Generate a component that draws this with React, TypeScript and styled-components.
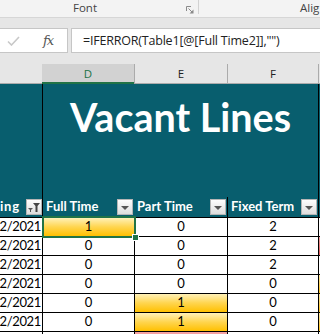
import { createGlobalStyle, styled } from "styled-components";

const teal = "#085e6e";
const excelGreen = "#217346";

const GlobalStyle = createGlobalStyle`
  html, body {
    margin: 0;
    padding: 0;
    background: #ffffff;
  }
  body {
    width: 320px;
    height: 334px;
    overflow: hidden;
    font-family: "Lato", "Liberation Sans", sans-serif;
  }
`;

const Page = styled.div`
  width: 320px;
  height: 334px;
  overflow: hidden;
  display: flex;
  flex-direction: column;
`;

// ribbon group labels
const Ribbon = styled.div`
  height: 17px;
  flex-shrink: 0;
  display: flex;
  align-items: flex-start;
  background: #f3f3f3;
  border-bottom: 1px solid #d6d6d6;
  font-family: "Open Sans", "Liberation Sans", sans-serif;
  font-size: 11.5px;
  line-height: 16px;
  color: #444444;
  white-space: nowrap;
  overflow: hidden;
`;

const RibbonGroup = styled.div`
  width: 198px;
  flex-shrink: 0;
  display: flex;
  align-items: flex-start;
`;

const GroupLabel = styled.span<{ $indent: number }>`
  flex-shrink: 0;
  margin-left: ${(p) => p.$indent}px;
`;

const Launcher = styled.svg`
  margin-left: auto;
  margin-right: 4px;
  margin-top: 6px;
  width: 8px;
  height: 8px;
`;

const GroupDivider = styled.div`
  width: 1px;
  height: 14px;
  flex-shrink: 0;
  background: #d2d2d2;
`;

// formula bar
const FormulaBar = styled.div`
  height: 35px;
  flex-shrink: 0;
  box-sizing: border-box;
  padding-top: 10px;
  display: flex;
  align-items: flex-start;
  gap: 3px;
  background: #e6e6e6;
`;

const ButtonsBox = styled.div`
  width: 68px;
  height: 25px;
  flex-shrink: 0;
  box-sizing: border-box;
  display: flex;
  align-items: center;
  background: #ffffff;
  border: 1px solid #c6c6c6;
  border-left: none;
`;

const CheckIcon = styled.svg`
  width: 13px;
  height: 10px;
  margin-left: 7px;
`;

const FxLabel = styled.span`
  margin-left: 23px;
  font-family: "DejaVu Serif", "Liberation Serif", serif;
  font-style: italic;
  font-size: 13px;
  color: #555555;
  letter-spacing: -1px;
`;

const FormulaInput = styled.div`
  flex: 1;
  height: 25px;
  box-sizing: border-box;
  padding-left: 11px;
  background: #ffffff;
  border: 1px solid #c6c6c6;
  border-right: none;
  font-family: "Open Sans", "Liberation Sans", sans-serif;
  font-size: 12.5px;
  letter-spacing: -0.2px;
  line-height: 23px;
  color: #222222;
  white-space: nowrap;
  overflow: hidden;
`;

// column letters
const ColumnStrip = styled.div`
  flex-shrink: 0;
  padding-top: 11px;
  background: #e6e6e6;
  display: grid;
  grid-template-columns: 42px 92px 93px 91px 2px;
`;

const ColumnLetter = styled.div<{ $selected?: boolean; $edge?: boolean }>`
  height: 20px;
  box-sizing: border-box;
  display: flex;
  align-items: center;
  justify-content: center;
  font-family: "Open Sans", "Liberation Sans", sans-serif;
  font-size: 11.5px;
  color: ${(p) => (p.$selected ? excelGreen : "#222222")};
  background: ${(p) => (p.$selected ? "#d2d2d2" : "#e6e6e6")};
  border-left: ${(p) => (p.$edge ? "1px solid #ababab" : "none")};
  border-bottom: ${(p) =>
    p.$selected ? `2px solid ${excelGreen}` : "1px solid #ababab"};
`;

// sheet
const Sheet = styled.div`
  flex: 1;
  display: grid;
  grid-template-columns: 42px 92px 93px 91px 2px;
  grid-template-rows: 113px 20px repeat(7, 19px);
  background: #ffffff;
`;

const TealCell = styled.div<{ $line?: boolean }>`
  background: ${teal};
  border-left: ${(p) => (p.$line ? "1px solid #000000" : "none")};
`;

const TitleCell = styled.div`
  grid-column: 2 / 5;
  background: ${teal};
  border-left: 1px solid #000000;
  display: flex;
  justify-content: center;
  align-items: flex-start;
  padding-top: 13px;
  font-weight: 700;
  font-size: 39.5px;
  line-height: 1;
  color: #ffffff;
  white-space: nowrap;
`;

const HeadCell = styled.div<{ $line?: boolean; $end?: boolean }>`
  box-sizing: border-box;
  display: flex;
  align-items: flex-end;
  justify-content: ${(p) => (p.$end ? "flex-end" : "flex-start")};
  gap: 3px;
  padding: 0 ${(p) => (p.$end ? "0" : "1px")} 2px ${(p) => (p.$end ? "0" : "3px")};
  overflow: hidden;
  background: ${teal};
  border-left: ${(p) => (p.$line ? "1px solid #000000" : "none")};
  font-weight: 700;
  font-size: 13px;
  line-height: 16px;
  color: #ffffff;
  white-space: nowrap;
`;

const HeadLabel = styled.span<{ $spread?: boolean }>`
  flex: 1;
  padding-bottom: 1px;
  letter-spacing: ${(p) => (p.$spread ? "0.8px" : "normal")};
`;

const FilterButton = styled.div`
  width: 16px;
  height: 16px;
  flex-shrink: 0;
  box-sizing: border-box;
  display: flex;
  align-items: center;
  justify-content: center;
  border: 1px solid #b5b5b5;
  background: linear-gradient(#fdfdfd, #dedede);
`;

const DropArrow = styled.div`
  width: 0;
  height: 0;
  margin-top: 1px;
  border-left: 4px solid transparent;
  border-right: 4px solid transparent;
  border-top: 4px solid #555555;
`;

type Fill = "gold" | "red" | "pink" | "amber";

const fills: Record<Fill, string> = {
  gold: "linear-gradient(180deg, #fff1b8 0%, #ffd54f 50%, #ffc000 100%)",
  amber: "linear-gradient(180deg, #ffe9a6 0%, #ffc21a 100%)",
  red: "linear-gradient(180deg, #f3a1a1 0%, #e25a5a 100%)",
  pink: "linear-gradient(180deg, #f6a3a3 0%, #f08c8c 100%)",
};

const DataCell = styled.div<{
  $line?: boolean;
  $fill?: Fill;
  $right?: boolean;
  $selected?: boolean;
}>`
  position: relative;
  box-sizing: border-box;
  display: flex;
  align-items: flex-end;
  justify-content: ${(p) => (p.$right ? "flex-end" : "center")};
  padding: 0 ${(p) => (p.$right ? "1px" : "0")} 1px 0;
  overflow: ${(p) => (p.$selected ? "visible" : "hidden")};
  z-index: ${(p) => (p.$selected ? 2 : 0)};
  border-top: 1px solid #000000;
  border-left: ${(p) => (p.$line ? "1px solid #000000" : "none")};
  background: ${(p) => (p.$fill ? fills[p.$fill] : "#ffffff")};
  font-size: 13px;
  letter-spacing: ${(p) => (p.$right ? "-0.35px" : "normal")};
  line-height: 17px;
  color: #000000;
  white-space: nowrap;

  ${(p) =>
    p.$selected &&
    `
    &::after {
      content: "";
      position: absolute;
      left: -1px;
      top: -2px;
      right: -2px;
      bottom: -2px;
      border: 2px solid ${excelGreen};
    }
    &::before {
      content: "";
      position: absolute;
      right: -5px;
      bottom: -5px;
      width: 5px;
      height: 5px;
      background: ${excelGreen};
      border: 1px solid #ffffff;
      z-index: 3;
    }
  `}
`;

interface Row {
  d: number;
  e: number;
  f: number;
  dFill?: Fill;
  eFill?: Fill;
  gFill?: Fill;
}

const rows: Row[] = [
  { d: 1, e: 0, f: 2, dFill: "gold" },
  { d: 0, e: 0, f: 2, gFill: "red" },
  { d: 0, e: 0, f: 2 },
  { d: 0, e: 0, f: 0, gFill: "amber" },
  { d: 0, e: 1, f: 0, eFill: "gold", gFill: "amber" },
  { d: 0, e: 1, f: 0, eFill: "gold", gFill: "amber" },
];

const Funnel = () => (
  <svg width="12" height="10" viewBox="0 0 12 10">
    <path d="M0 6h5L3 8v2H2V8z" fill="#555555" />
    <path d="M5 1h7L9.5 4v6h-2V4z" fill="#444444" />
  </svg>
);

export default function App() {
  return (
    <Page>
      <GlobalStyle />
      <Ribbon>
        <RibbonGroup>
          <GroupLabel $indent={73}>Font</GroupLabel>
          <Launcher viewBox="0 0 8 8">
            <path d="M0.5 5V0.5H5" stroke="#8a8a8a" fill="none" />
            <path d="M2.5 2.5L6.5 6.5" stroke="#8a8a8a" />
            <path d="M7.5 3.5V7.5H3.5z" fill="#8a8a8a" />
          </Launcher>
        </RibbonGroup>
        <GroupDivider />
        <GroupLabel $indent={101}>Alig</GroupLabel>
      </Ribbon>

      <FormulaBar>
        <ButtonsBox>
          <CheckIcon viewBox="0 0 13 10">
            <path
              d="M1 5.5L4.5 9L12 1"
              stroke="#c8c8c8"
              strokeWidth="1.6"
              fill="none"
            />
          </CheckIcon>
          <FxLabel>fx</FxLabel>
        </ButtonsBox>
        <FormulaInput>=IFERROR(Table1[@[Full Time2]],"")</FormulaInput>
      </FormulaBar>

      <ColumnStrip>
        <ColumnLetter />
        <ColumnLetter $selected>D</ColumnLetter>
        <ColumnLetter $edge>E</ColumnLetter>
        <ColumnLetter $edge>F</ColumnLetter>
        <ColumnLetter $edge />
      </ColumnStrip>

      <Sheet>
        <TealCell />
        <TitleCell>Vacant Lines</TitleCell>
        <TealCell $line />

        <HeadCell $end>
          <HeadLabel $spread>ing</HeadLabel>
          <FilterButton>
            <Funnel />
          </FilterButton>
        </HeadCell>
        <HeadCell $line>
          <HeadLabel>Full Time</HeadLabel>
          <FilterButton>
            <DropArrow />
          </FilterButton>
        </HeadCell>
        <HeadCell>
          <HeadLabel>Part Time</HeadLabel>
          <FilterButton>
            <DropArrow />
          </FilterButton>
        </HeadCell>
        <HeadCell $line>
          <HeadLabel>Fixed Term</HeadLabel>
          <FilterButton>
            <DropArrow />
          </FilterButton>
        </HeadCell>
        <TealCell $line />

        {rows.map((r, i) => (
          <>
            <DataCell key={`c${i}`} $right>
              2/2021
            </DataCell>
            <DataCell key={`d${i}`} $line $fill={r.dFill} $selected={i === 0}>
              {r.d}
            </DataCell>
            <DataCell key={`e${i}`} $line $fill={r.eFill}>
              {r.e}
            </DataCell>
            <DataCell key={`f${i}`} $line>
              {r.f}
            </DataCell>
            <DataCell key={`g${i}`} $line $fill={r.gFill} />
          </>
        ))}

        <DataCell />
        <DataCell $line />
        <DataCell $line $fill="pink" />
        <DataCell $line />
        <DataCell $line />
      </Sheet>
    </Page>
  );
}
